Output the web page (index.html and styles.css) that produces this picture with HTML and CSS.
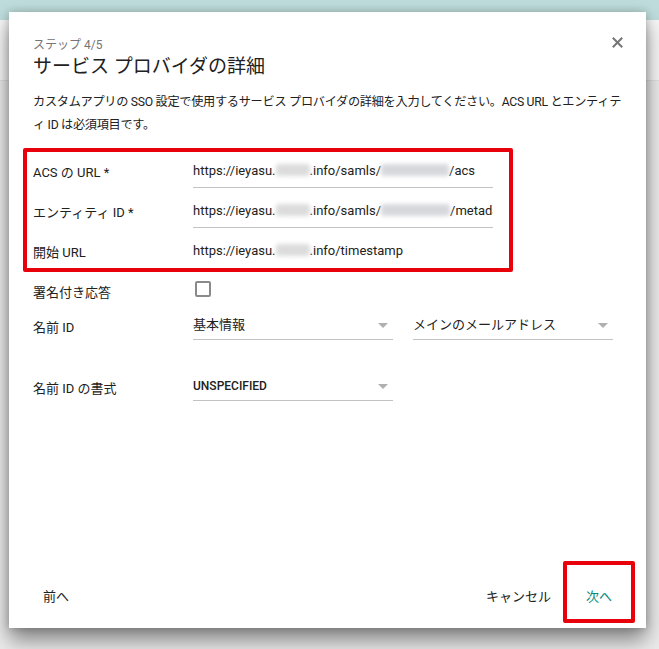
FILE: index.html
```html
<!DOCTYPE html>
<html lang="ja">
<head>
    <meta charset="UTF-8">
    <meta name="viewport" content="width=device-width, initial-scale=1.0">
    <title>サービス プロバイダの詳細</title>
    <link rel="stylesheet" href="styles.css">
</head>
<body>
    <div class="topbar"></div>
    <div class="page"></div>

    <div class="dialog">
        <div class="header">
            <div>
                <div class="step">ステップ 4/5</div>
                <h1 class="title">サービス プロバイダの詳細</h1>
            </div>
            <button class="close" aria-label="閉じる">
                <svg width="11" height="11" viewBox="0 0 11 11">
                    <path d="M1.5 1.5 L9.5 9.5 M9.5 1.5 L1.5 9.5" stroke="#757575" stroke-width="2" stroke-linecap="square"/>
                </svg>
            </button>
        </div>

        <p class="desc">カスタムアプリの SSO 設定で使用するサービス プロバイダの詳細を入力してください。ACS URL とエンティティ ID は必須項目です。</p>

        <div class="form">
            <div class="row">
                <div class="label">ACS の URL *</div>
                <div class="field">https://ieyasu.<span class="blur b1"></span>.info/samls/<span class="blur b2"></span>/acs</div>
            </div>
            <div class="row">
                <div class="label">エンティティ ID *</div>
                <div class="field">https://ieyasu.<span class="blur b1"></span>.info/samls/<span class="blur b3"></span>/metadata</div>
            </div>
            <div class="row">
                <div class="label">開始 URL</div>
                <div class="field plain">https://ieyasu.<span class="blur b1"></span>.info/timestamp</div>
            </div>
            <div class="row">
                <div class="label">署名付き応答</div>
                <div class="checkbox"></div>
            </div>
            <div class="row short">
                <div class="label">名前 ID</div>
                <div class="select">基本情報<span class="arrow"></span></div>
                <div class="select second">メインのメールアドレス<span class="arrow"></span></div>
            </div>
            <div class="row short spaced">
                <div class="label">名前 ID の書式</div>
                <div class="select caps">UNSPECIFIED<span class="arrow"></span></div>
            </div>
        </div>

        <div class="footer">
            <button class="btn">前へ</button>
            <div class="actions">
                <button class="btn">キャンセル</button>
                <button class="btn primary">次へ</button>
            </div>
        </div>

        <!-- annotation boxes drawn over the dialog -->
        <div class="mark mark-form"></div>
        <div class="mark mark-next"></div>
    </div>
</body>
</html>
```

FILE: styles.css
```css
body {
    margin: 0;
    font-family: Roboto, "Noto Sans CJK JP", sans-serif;
    background: #ececec;
    color: #212121;
    height: 649px;
    overflow: hidden;
}
.topbar {
    height: 20px;
    background: #bddcdb;
}
.page {
    height: 60px;
    background: #f7f7f7;
    border-bottom: 1px solid #e2e2e2;
}

.dialog {
    position: absolute;
    top: 12px;
    left: 9px;
    width: 637px;
    height: 616px;
    background: #fff;
    box-shadow: 0 12px 20px rgba(0, 0, 0, 0.45), 0 0 8px rgba(0, 0, 0, 0.2);
    display: flex;
    flex-direction: column;
    box-sizing: border-box;
    padding: 0 24px;
}

.header {
    display: flex;
    justify-content: space-between;
    align-items: flex-start;
    padding-top: 24px;
}
.step {
    font-size: 12px;
    line-height: 18px;
    color: #757575;
}
.title {
    margin: 0;
    font-size: 19px;
    font-weight: normal;
    line-height: 26px;
}
.close {
    border: none;
    background: none;
    padding: 0;
    margin: 1px -1px 0 0;
    width: 11px;
    height: 11px;
    display: flex;
}

.desc {
    margin: 11px 0 0;
    font-size: 12.2px;
    line-height: 23px;
    letter-spacing: -0.3px;
    line-break: loose;
    word-break: break-all;
}

.form {
    margin-top: 14px;
}
.row {
    display: flex;
    align-items: center;
    height: 40px;
}
.row.short {
    height: 30px;
}
.row.spaced {
    margin-top: 31px;
}
.label {
    width: 160px;
    flex: none;
    font-size: 13px;
}
.field {
    width: 300px;
    height: 34px;
    box-sizing: border-box;
    border-bottom: 1px solid #c2c2c2;
    font-size: 13px;
    line-height: 34px;
    white-space: nowrap;
    overflow: hidden;
}
.field.plain {
    border-bottom-color: transparent;
}
.blur {
    display: inline-block;
    height: 12px;
    vertical-align: -1px;
    background: #dcdcdc;
    filter: blur(2px);
    border-radius: 3px;
}
.b1 { width: 34px; }
.b2 { width: 68px; background: #d6d8dc; }
.b3 { width: 69px; background: #d6d8dc; }

.checkbox {
    width: 12px;
    height: 12px;
    border: 2px solid #8a8a8a;
    border-radius: 2px;
    margin: -4px 0 0 2px;
}

.select {
    position: relative;
    width: 200px;
    height: 28px;
    box-sizing: border-box;
    border-bottom: 1px solid #c2c2c2;
    font-size: 13px;
    line-height: 26px;
    margin-top: -1px;
}
.select.second {
    margin-left: 20px;
}
.select.caps {
    font-size: 12px;
    font-weight: 500;
}
.arrow {
    position: absolute;
    right: 5px;
    top: 11px;
    border-left: 5px solid transparent;
    border-right: 5px solid transparent;
    border-top: 5px solid #b0b0b0;
}

.footer {
    margin-top: auto;
    display: flex;
    justify-content: space-between;
    align-items: center;
    padding-bottom: 15px;
}
.actions {
    display: flex;
    gap: 15px;
}
.btn {
    border: none;
    background: none;
    font-family: inherit;
    font-size: 13px;
    color: #212121;
    padding: 0 10px;
    height: 36px;
    cursor: pointer;
}
.btn.primary {
    color: #00897b;
}

.mark {
    position: absolute;
    border: 4px solid #e8000b;
    border-radius: 2px;
    box-sizing: border-box;
}
.mark-form {
    left: 14px;
    top: 136px;
    width: 490px;
    height: 124px;
}
.mark-next {
    left: 554px;
    top: 549px;
    width: 72px;
    height: 62px;
}
```
